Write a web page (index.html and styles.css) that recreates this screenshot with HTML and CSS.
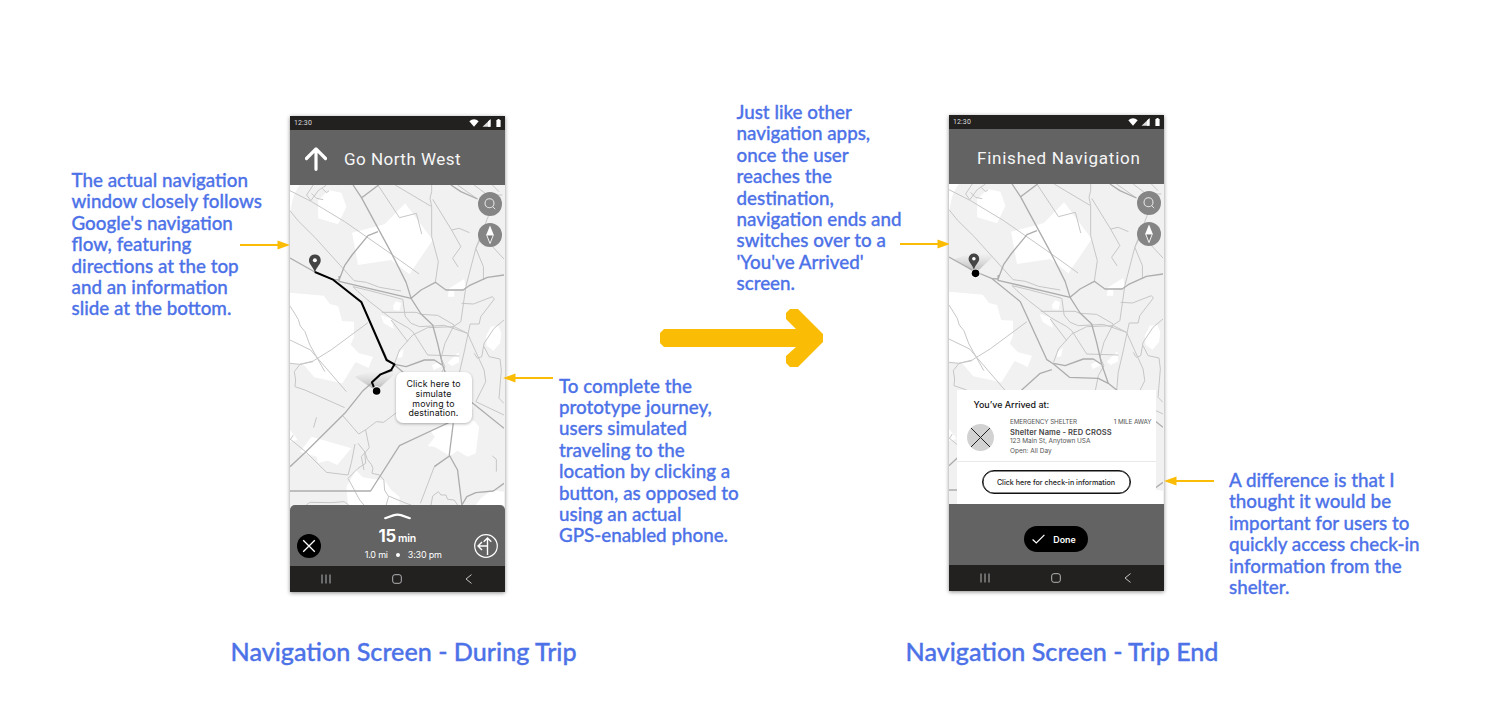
FILE: index.html
```html
<!DOCTYPE html>
<html lang="en">
<head>
<meta charset="utf-8">
<title>Navigation Screens</title>
<link rel="stylesheet" href="styles.css">
</head>
<body>
<svg class="defs" aria-hidden="true">
  <defs>
    <symbol id="wifi" viewBox="0 0 10 8"><path d="M.3 2.2Q5-1.6 9.700 2.200L5 7.800z" fill="#fff"/></symbol>
    <symbol id="signal" viewBox="0 0 9 8"><path d="M8.500.2v7.600H.5z" fill="#ddd"/><path d="M8.500.2v7.600H6V2.600z" fill="#fff"/></symbol>
    <symbol id="battery" viewBox="0 0 5 8"><path d="M1.500 0h2v1H4.600v7H.4V1h1.100z" fill="#fff"/></symbol>
    <symbol id="recent" viewBox="0 0 10 10"><path d="M1 .5v9M5 .5v9M9 .5v9" stroke="#b5b5b5" stroke-width="1" fill="none"/></symbol>
    <symbol id="home" viewBox="0 0 10 10"><rect x=".7" y=".7" width="8.600" height="8.600" rx="2.200" stroke="#b5b5b5" fill="none"/></symbol>
    <symbol id="back" viewBox="0 0 10 10"><path d="M7.500.6 2 5l5.500 4.400" stroke="#c5c5c5" fill="none"/></symbol>
    <symbol id="streets" viewBox="15 15 645 960">
      <rect x="15" y="15" width="645" height="960" fill="#f1f1f1"/>
      <g fill="#fff">
        <path d="M15 15H45Q24 40 20 75L15 95zM100 60 132 30 170 38 185 80 160 133 100 115z"/>
        <path d="M202 158 300 133 362 70 445 180 375 283 320 240 220 255z"/>
        <path d="M15 338 117 347 135 372 160 378 172 423 208 425 208 470 198 494 223 520 265 530 252 564 213 546 173 610 88 592 55 553 15 550z"/>
        <path d="M325 378 335 364 350 370 345 392 328 390zM288 405 320 415 328 447 298 430zM495 325 540 297 545 325 510 330 510 350 490 350z"/>
        <path d="M605 470 620 440 643 437 652 460 648 490 628 512 608 497zM340 520 358 506 353 532 340 535zM443 556 463 545 470 560 448 570zM490 548 523 517 525 547 503 558z"/>
        <path d="M430 798 452 770 440 755 500 730 520 710 570 722 585 740 575 820 550 830 520 812 497 828 450 800z"/>
        <path d="M45 815 80 770 122 782 200 805 157 855 130 842 100 848 95 830z"/>
        <path d="M190 975 185 920 200 895 213 870 235 892 270 898 300 900 320 930 345 950 345 975z"/>
        <path d="M575 975 590 955 625 930 660 935V975zM15 750 28 765 38 780 15 785zM560 660 572 670 565 690 558 690z"/>
      </g>
      <g fill="none" stroke="#c6c6c6" stroke-width="3" stroke-linejoin="round">
        <path d="M15 32 80 65 180 125 310 215 404 282M65 45 85 15M65 45 78 62 100 32 125 15M80 40 95 55 115 59M112 25 125 38 133 32"/>
        <path d="M15 92 40 123 90 172 208 302 245 307 285 322 350 333M280 15 345 113 396 100 412 162M332 15 440 79M442 15V35L437 55 442 79V170L462 245 453 307M445 58 502 150 530 200 505 235 522 261M502 150 525 145 556 158"/>
        <path d="M660 237 616 190 590 175 575 205 598 260V300M620 90 575 205 545 320 530 425 507 440 507 445M205 320 255 332 355 358 362 408 380 430 405 440 480 436 550 460"/>
        <path d="M205 320 220 335 255 365 320 415 370 443 385 455 430 525 525 528M292 397H395L410 403 460 406 510 435 482 490 470 535 482 560 465 590 455 640M320 420 370 485M330 550 345 510 385 465 430 443 510 440 550 460 600 570 605 605 575 665 660 705"/>
        <path d="M532 370 568 372 625 350 631 357 590 410 585 432H558L538 525 525 580 520 640M660 420 630 445 600 490 593 530 580 535 570 520M600 500 615 530 648 537 652 570 645 655 660 670"/>
        <path d="M15 378 40 418 46 438 60 455 75 495 120 575M15 480 77 510 185 635M15 550 45 553 85 543 140 509 250 428M45 553 28 575 32 600 30 620 60 630 180 683M45 553 85 545"/>
        <path d="M175 708 222 762 245 748 275 725 297 727 340 695M95 712 86 743M15 777 62 815 125 877 190 885 200 848 211 792M220 790 240 815 243 850 220 865 190 895 225 960 238 975M243 750 254 803 230 830 238 870"/>
        <path d="M240 815 248 838 260 853 265 865 262 880 285 885 298 900 300 930 312 950 305 975M64 975 75 967 138 968 178 965 192 975M312 948 365 970 380 975M440 975 445 948 462 935 470 945 485 945 490 958 510 960 520 975M625 828 637 838V875M15 780 25 765"/>
        <path d="M497 828 450 860 408 970M507 730 512 665M570 15 610 45 655 45M625 15 645 35M520 15 580 57"/>
      </g>
      <g fill="none" stroke="#adadad" stroke-width="4" stroke-linejoin="round">
        <path d="M15 234 90 276 145 299 230 368 310 542 330 555 378 595 465 598 495 613 660 745"/>
        <path d="M205 15 230 52 320 218 365 307 380 355 410 402 445 435 460 490 475 555 495 613M282 15 230 54M280 155 250 167 202 225 180 256 163 300 145 299M163 288V304L380 355 410 330 453 307 485 330 537 330 555 317 610 292 660 285M500 15 530 35 580 57"/>
        <path d="M330 553 365 560 420 540 450 540 473 555M15 860 60 818 180 700 235 632 290 583 325 572M15 933H258L345 797 510 720M507 730 495 825 520 870 533 975M495 828 450 860M533 975 548 950 575 938 628 933 660 910"/>
      </g>
    </symbol>
    <symbol id="pin" viewBox="0 0 36 56"><path d="M18 0A18 18 0 0 0 0 18C0 31 12 35 18 55C24 35 36 31 36 18A18 18 0 0 0 18 0z" fill="#444"/><circle cx="18" cy="18" r="6" fill="#fff"/></symbol>
    <symbol id="lens" viewBox="0 0 24 24"><circle cx="12" cy="12" r="12" fill="#858585"/><circle cx="11.500" cy="11.300" r="4.500" stroke="#e4e4e4" stroke-width="1.100" fill="none"/><path d="M14.700 14.700 17.200 17.200" stroke="#e4e4e4"/></symbol>
    <symbol id="compass" viewBox="0 0 24 24"><circle cx="12" cy="12" r="12" fill="#858585"/><path d="M12 2.500 8.200 12h7.600z" fill="#fff"/><path d="M8.700 12 12 20.500 15.300 12z" fill="#777" stroke="#fff" stroke-width=".9"/></symbol>
    <linearGradient id="beam" x1="0" y1="1" x2="0" y2="0"><stop offset="0" stop-color="#999" stop-opacity=".75"/><stop offset="1" stop-color="#bbb" stop-opacity="0"/></linearGradient>
    <symbol id="arrow-right" viewBox="0 0 50 10"><path d="M0 5H40" stroke="#fbbc05" stroke-width="2"/><path d="M37.500.4 50 5 37.500 9.600z" fill="#fbbc05"/></symbol>
    <symbol id="arrow-left" viewBox="0 0 50 10"><path d="M10 5H50" stroke="#fbbc05" stroke-width="2"/><path d="M12.500.4 0 5 12.500 9.600z" fill="#fbbc05"/></symbol>
  </defs>
</svg>

<main class="board">
  <section class="side side-left">
    <p class="note">The actual navigation<br>window closely follows<br>Google's navigation<br>flow, featuring<br>directions at the top<br>and an information<br>slide at the bottom.</p>
    <svg class="pointer pointer-left"><use href="#arrow-right"/></svg>
  </section>

  <article class="phone">
    <div class="status"><span>12:30</span><span class="status-icons"><svg class="wifi"><use href="#wifi"/></svg><svg class="signal"><use href="#signal"/></svg><svg class="battery"><use href="#battery"/></svg></span></div>
    <header class="heading">
      <svg class="up" viewBox="0 0 22 24"><path d="M11 22.300V2M1.500 11.500 11 1.900 20.500 11.500" fill="none" stroke="#fff" stroke-width="3.200" stroke-linecap="round" stroke-linejoin="round"/></svg>
      <h2>Go North West</h2>
    </header>
    <div class="map map-trip">
      <svg class="map-art" viewBox="15 15 645 960" preserveAspectRatio="none">
        <use href="#streets" x="15" y="15" width="645" height="960"/>
        <path d="M275 633 210 590Q270 565 333 580z" fill="url(#beam)"/>
        <path d="M90 276 145 299 230 366 306 540 330 553 320 570 288 583 262 607 268 622" fill="none" stroke="#000" stroke-width="6" stroke-linejoin="round"/>
        <circle cx="276" cy="633" r="14" fill="#fff"/><circle cx="276" cy="633" r="11.500" fill="#000"/>
        <use href="#pin" x="72" y="223" width="36" height="56"/>
      </svg>
      <div class="tools"><svg><use href="#lens"/></svg><svg><use href="#compass"/></svg></div>
      <button class="bubble">Click here to<br>simulate<br>moving to<br>destination.</button>
    </div>
    <footer class="trip">
      <svg class="round" viewBox="0 0 24 24"><circle cx="12" cy="12" r="12" fill="#000"/><path d="M6.200 6.200 17.800 17.800M17.800 6.200 6.200 17.800" stroke="#fff" stroke-width="1.300"/></svg>
      <div class="eta">
        <svg class="grip" viewBox="0 0 27 7"><path d="M1.200 5.200 10 2.100Q13.500 1.200 17 2.100L25.800 5.200" fill="none" stroke="#fff" stroke-width="2.200" stroke-linecap="round"/></svg>
        <div class="time">15 <small>min</small></div>
        <div class="distance"><span>1.0 mi</span><i></i><span>3:30 pm</span></div>
      </div>
      <svg class="round" viewBox="0 0 24 24"><g fill="none" stroke="#fff" stroke-width="1.200"><circle cx="12" cy="12" r="11.300"/><path d="M13.500 21V4.500M9.700 7.800 13.500 4 17.300 7.800M13.500 12H4.500M8 8 4 12l4 4" stroke-width="1.400"/></g></svg>
    </footer>
    <nav class="system"><svg><use href="#recent"/></svg><svg><use href="#home"/></svg><svg><use href="#back"/></svg></nav>
  </article>

  <section class="middle">
    <p class="note note-arrival">Just like other<br>navigation apps,<br>once the user<br>reaches the<br>destination,<br>navigation ends and<br>switches over to a<br>'You've Arrived'<br>screen.</p>
    <svg class="big-arrow" viewBox="0 0 164 60"><path d="M4 21H136L126 11V5L130 1H138L163 26V34L138 59H130L126 55V48L136 39H4L0 35V25z" fill="#fbbc05"/></svg>
    <p class="note note-simulate">To complete the<br>prototype journey,<br>users simulated<br>traveling to the<br>location by clicking a<br>button, as opposed to<br>using an actual<br>GPS-enabled phone.</p>
    <svg class="pointer pointer-map"><use href="#arrow-left"/></svg>
    <svg class="pointer pointer-end"><use href="#arrow-right"/></svg>
  </section>

  <article class="phone phone-end">
    <div class="status"><span>12:30</span><span class="status-icons"><svg class="wifi"><use href="#wifi"/></svg><svg class="signal"><use href="#signal"/></svg><svg class="battery"><use href="#battery"/></svg></span></div>
    <header class="heading heading-end"><h2>Finished Navigation</h2></header>
    <div class="map">
      <svg class="map-art" viewBox="15 15 645 960" preserveAspectRatio="none">
        <use href="#streets" x="15" y="15" width="645" height="960"/>
        <path d="M95 283 30 240Q90 215 150 230z" fill="url(#beam)"/>
        <circle cx="95" cy="283" r="14" fill="#fff"/><circle cx="95" cy="283" r="11.500" fill="#000"/>
        <use href="#pin" x="72" y="223" width="36" height="50"/>
      </svg>
      <div class="tools"><svg><use href="#lens"/></svg><svg><use href="#compass"/></svg></div>
      <section class="arrival">
        <h3>You’ve Arrived at:</h3>
        <div class="shelter">
          <svg class="thumb" viewBox="0 0 27 27"><circle cx="13.500" cy="13.500" r="13.500" fill="#d2d2d2"/><path d="M4 4 23 23M23 4 4 23" stroke="#222" stroke-width="1"/></svg>
          <div class="details">
            <div class="kind"><span>EMERGENCY SHELTER</span><span>1 MILE AWAY</span></div>
            <strong>Shelter Name - RED CROSS</strong>
            <span class="address">123 Main St, Anytown USA</span>
            <span class="hours">Open: All Day</span>
          </div>
        </div>
        <div class="check-in"><button>Click here for check-in information</button></div>
      </section>
    </div>
    <footer class="finish"><button><svg viewBox="0 0 13 10"><path d="M.6 5.500 4.300 9 12.400.8" fill="none" stroke="#fff" stroke-width="1.200"/></svg>Done</button></footer>
    <nav class="system"><svg><use href="#recent"/></svg><svg><use href="#home"/></svg><svg><use href="#back"/></svg></nav>
  </article>

  <section class="side side-right">
    <svg class="pointer"><use href="#arrow-left"/></svg>
    <p class="note">A difference is that I<br>thought it would be<br>important for users to<br>quickly access check-in<br>information from the<br>shelter.</p>
  </section>
</main>
<div class="captions">
  <h1>Navigation Screen - During Trip</h1>
  <h1>Navigation Screen - Trip End</h1>
</div>
</body>
</html>
```
FILE: styles.css
```css
* { box-sizing: border-box; }
body { margin: 0; background: #fff; width: 1500px; height: 714px; overflow: hidden; font-family: Lato, sans-serif; }
svg { display: block; flex: none; }
.defs { position: absolute; width: 0; height: 0; }
p, h1, h2, h3 { margin: 0; }
button { border: 0; padding: 0; margin: 0; font: inherit; }

.board { display: grid; grid-template-columns: 290px 214.500px 444.500px 214.500px 336.500px; height: 592px; align-items: start; }
.note { color: #4d72e8; font-size: 18.800px; line-height: 21.400px; font-weight: 500; -webkit-text-stroke: .3px #4d72e8; white-space: nowrap; }
.side, .middle { position: relative; height: 592px; }
.side-left { padding: 169px 0 0 71.500px; }
.side-right { display: flex; gap: 15.500px; padding-top: 469px; }
.side-right .pointer { margin-top: 7px; }
.pointer { width: 50px; height: 10px; }
.pointer-left { position: absolute; left: 240px; top: 240px; }
.pointer-map { position: absolute; left: -2px; top: 373px; }
.pointer-end { position: absolute; left: 395.500px; top: 239px; }
.middle { display: flex; flex-direction: column; align-items: flex-start; }
.note-arrival { margin: 101px 0 0 232px; }
.big-arrow { width: 164px; height: 60px; margin: 14.400px 0 0 155px; }
.note-simulate { margin: 6.600px 0 0 54.500px; }

.phone { margin-top: 116px; height: 476px; display: flex; flex-direction: column; box-shadow: 0 1px 4px rgba(0,0,0,.45); font-family: Inter, sans-serif; }
.phone-end { margin-top: 115px; }
.status { height: 14px; background: #222120; color: #ddd; display: flex; align-items: center; justify-content: space-between; padding: 0 4px; font: 7px/14px Roboto, sans-serif; letter-spacing: .1px; }
.status-icons { display: flex; align-items: center; }
.wifi { width: 10px; height: 8px; }
.signal { width: 9px; height: 8px; margin-left: 3px; }
.battery { width: 5px; height: 8px; margin-left: 5px; }
.heading { height: 55px; background: #636363; display: flex; align-items: center; padding: 3px 0 0 15px; color: #f6f6f6; }
.heading h2 { font: 400 17px/22px Roboto, sans-serif; letter-spacing: .48px; margin-left: 17px; white-space: nowrap; }
.up { width: 22px; height: 24px; }
.heading-end { padding-left: 28px; }
.heading.heading-end h2 { margin-left: 0; letter-spacing: .76px; }

.map { position: relative; height: 320px; background: #f1f1f1; border-left: 0; }
.map-trip { height: 325px; margin-bottom: -5px; flex: none; overflow: hidden; }
.map-art { width: 214px; height: 320px; }
.tools { position: absolute; right: 3px; top: 7px; display: grid; gap: 7px; }
.tools svg { width: 24px; height: 24px; }
.bubble { position: absolute; left: 105.500px; top: 187px; width: 76px; height: 51px; border-radius: 7px; background: #fff; box-shadow: 0 1px 3px rgba(0,0,0,.3); color: #111; font-size: 8.800px; line-height: 9.600px; padding-top: 2px; letter-spacing: .15px; }
.trip { position: relative; flex: none; height: 61px; display: flex; align-items: center; justify-content: space-between; padding: 20px 7px 0; color: #fff; background: #636363; border-radius: 5px 5px 0 0; }
.round { width: 24px; height: 24px; }
.eta { display: flex; flex-direction: column; align-items: center; height: 61px; margin-top: -20px; padding-top: 8px; }
.grip { width: 27px; height: 7px; }
.time { font-size: 16.800px; line-height: 20px; font-weight: 700; margin-top: 6px; letter-spacing: -.2px; }
.time small { font-size: 10.500px; font-weight: 600; margin-left: -2px; }
.distance { display: flex; align-items: center; font-size: 9px; line-height: 14px; margin-top: -1px; padding-left: 12px; gap: 8px; letter-spacing: -.2px; }
.distance i { width: 4px; height: 4px; border-radius: 50%; background: #fff; }
.system { height: 26px; flex: none; background: #222120; display: flex; justify-content: space-between; align-items: center; padding: 0 31px; }
.system svg { width: 10px; height: 10px; }

.arrival { position: absolute; left: 8px; top: 205.500px; width: 199px; height: 114.500px; background: #fff; color: #111; }
.arrival h3 { font-size: 8.900px; line-height: 12px; font-weight: 500; padding: 9px 0 0 16.500px; }
.shelter { display: flex; height: 51px; padding: 6px 4.500px 0 10px; gap: 16px; border-bottom: 1px solid #e9e9e9; }
.thumb { width: 27px; height: 27px; margin-top: 7px; }
.details { flex: 1; display: flex; flex-direction: column; font-size: 6.500px; line-height: 9px; color: #555; white-space: nowrap; }
.kind { display: flex; justify-content: space-between; font-size: 6.300px; line-height: 10px; letter-spacing: -.1px; }
.details strong { font-size: 7.500px; line-height: 11px; font-weight: 600; letter-spacing: .12px; color: #444; }
.details .address { margin-top: -1px; letter-spacing: -.05px; }
.hours { margin-top: 1px; }
.check-in { padding: 8px 0 0 24.500px; }
.check-in button { display: block; width: 149px; height: 24px; border: 1.500px solid #111; border-radius: 12px; background: #fff; font-size: 7.150px; font-weight: 500; color: #222; box-shadow: inset 0 0 0 .5px #111; padding-top: 1px; }
.finish { height: 61px; background: #636363; display: flex; justify-content: center; padding-top: 22px; }
.finish button { width: 64px; height: 26px; border-radius: 13px; background: #000; color: #fff; display: flex; align-items: center; gap: 8px; padding-left: 8px; font-size: 8.900px; font-weight: 600; }
.finish svg { width: 13px; height: 10px; }

.captions { display: flex; padding: 43px 0 0 230.500px; color: #4d72e8; }
.captions h1 { width: 675px; font-size: 25.150px; line-height: 32px; font-weight: 500; -webkit-text-stroke: .35px #4d72e8; white-space: nowrap; }
.captions h1:last-child { width: auto; }
```
